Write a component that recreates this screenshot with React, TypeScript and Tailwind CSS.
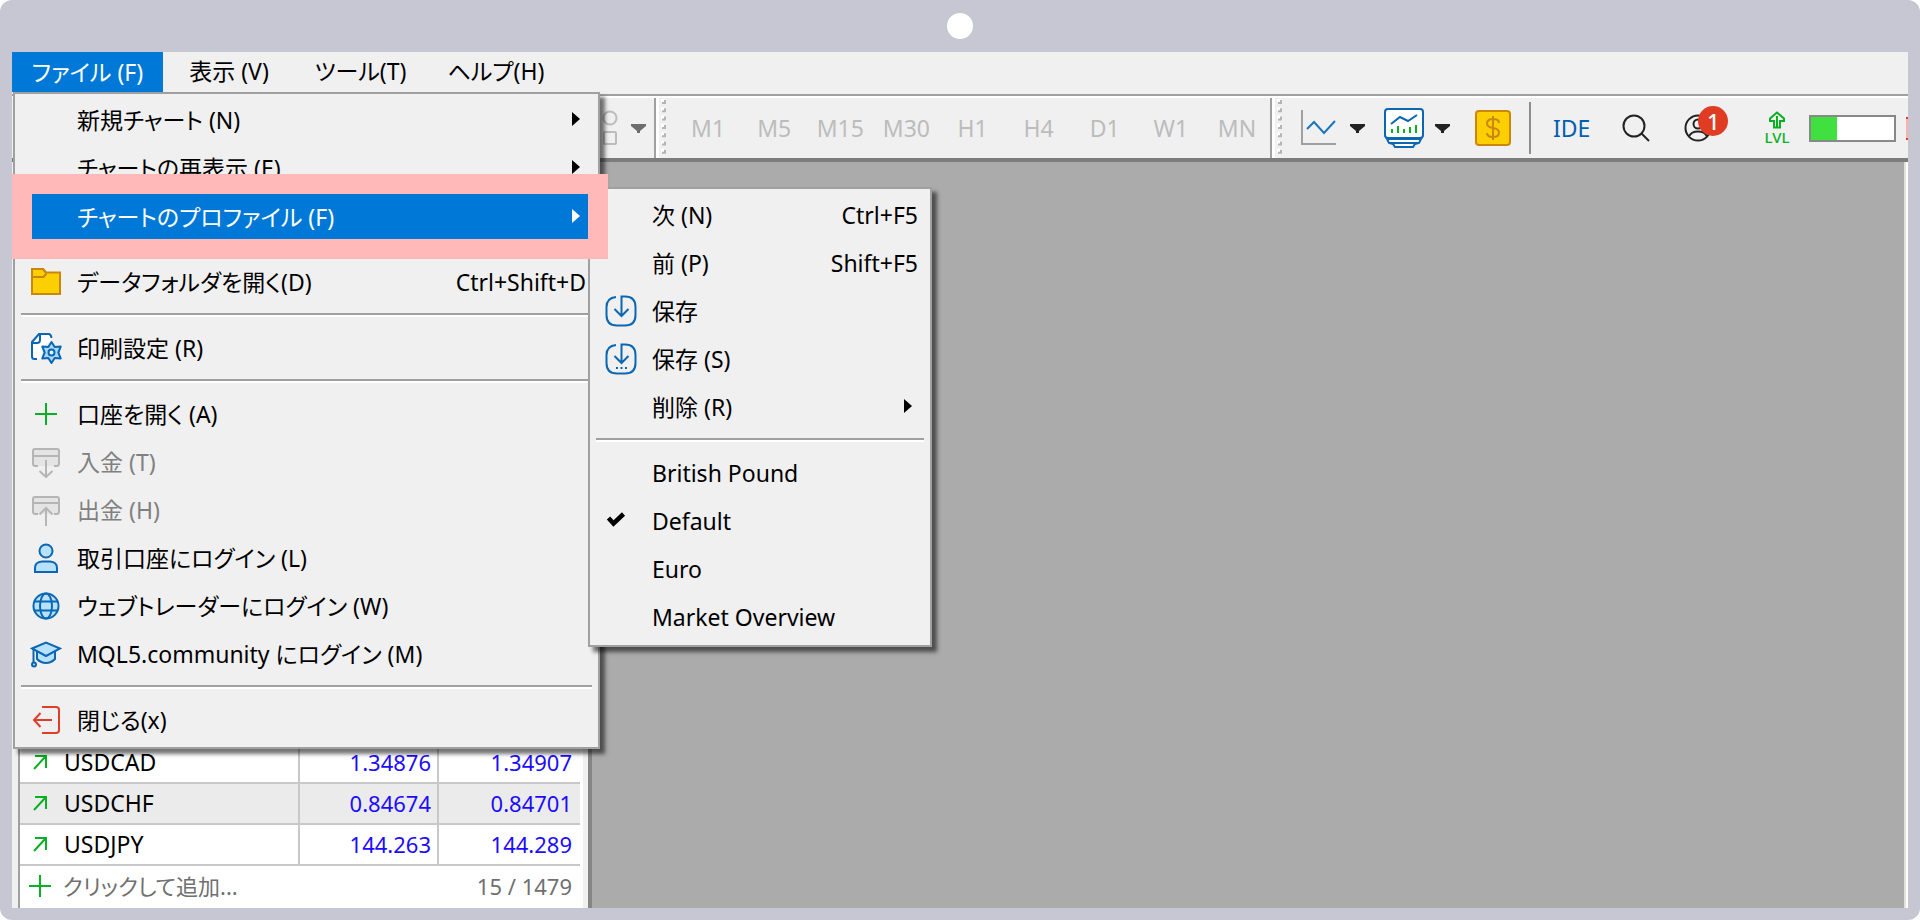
import React from 'react';

type IconName =
  | 'folder'
  | 'print'
  | 'plus'
  | 'deposit'
  | 'withdraw'
  | 'user'
  | 'globe'
  | 'cap'
  | 'exit'
  | 'save'
  | 'saveAs'
  | 'check';

type Item = {
  label: string;
  icon?: IconName;
  shortcut?: string;
  arrow?: boolean;
  disabled?: boolean;
};

const BLUE = '#0b67b2';

const icons: Record<IconName, React.ReactNode> = {
  folder: (
    <g fill="#fccf03" stroke="#cb860d" strokeWidth="2">
      <path d="M2 28V3h11l3 3.500h14V28z" />
      <path d="M2 11h11.500l3-3.500M2 3h11l3 4" fill="none" />
    </g>
  ),
  print: (
    <g stroke={BLUE} strokeWidth="2">
      <path d="M6 27H4.500Q2 27 2 24.500V10L9 2h9.500Q21 2 21 4.500V8L12 16v11z" fill="#fff" stroke="none" />
      <path d="M7 27H4.500Q2 27 2 24.500V10L9 2h9.500Q21 2 21.500 6M2 11h5q3 0 3-3V2" fill="none" />
      <path
        d="M21.500 10l3.200 5 6-.4-2.400 5.900 2.400 5.900-6-.4-3.200 5-3.200-5-6 .4 2.400-5.900-2.400-5.900 6 .4z"
        fill="#a8d8fb"
        strokeLinejoin="round"
      />
      <circle cx="21.500" cy="20.500" r="3" fill="#f0f0f0" />
    </g>
  ),
  plus: <path d="M5 16h22M16 5v22" stroke="#0ab024" strokeWidth="2" fill="none" />,
  deposit: (
    <g stroke="#b5b5b5" strokeWidth="2" fill="none">
      <path d="M8 20H5.500Q3 20 3 17.500V5q0-2 2-2h22q2 0 2 2v12.500Q29 20 26.500 20H24" fill="#e4e4e4" />
      <path d="M3 10h26M16 14v17M9.500 25l6.500 6 6.500-6" />
    </g>
  ),
  withdraw: (
    <g stroke="#b5b5b5" strokeWidth="2" fill="none">
      <path d="M8 20H5.500Q3 20 3 17.500V5q0-2 2-2h22q2 0 2 2v12.500Q29 20 26.500 20H24" fill="#e4e4e4" />
      <path d="M3 9h26M16 32V14M9.500 20.500l6.500-6.500 6.500 6.500" />
    </g>
  ),
  user: (
    <g stroke={BLUE} strokeWidth="2" fill="#b8e1ff">
      <circle cx="16" cy="9" r="6.500" />
      <path d="M5 30v-4q0-6 7-6.500h8q7 .5 7 6.500v4z" />
    </g>
  ),
  globe: (
    <g stroke={BLUE} strokeWidth="2" fill="none">
      <circle cx="16" cy="16" r="12.500" fill="#b8e1ff" />
      <ellipse cx="16" cy="16" rx="6" ry="12.500" />
      <path d="M4.500 11.500h23M4.500 20.500h23" />
    </g>
  ),
  cap: (
    <g stroke={BLUE} strokeWidth="2" fill="#b8e1ff">
      <path d="M7 13v8q4 4 9 4t9-4v-8" />
      <path d="M2 10.500L16 4.500l14 6L16 18z" />
      <path d="M3.500 11v13" fill="none" />
      <circle cx="4" cy="26.500" r="2" />
    </g>
  ),
  exit: (
    <path
      d="M12 3h14q3 0 3 3v20q0 3-3 3H12M22 16H4M10.500 9L4 16l6.500 7"
      stroke="#e03e28"
      strokeWidth="2"
      fill="none"
    />
  ),
  save: (
    <path
      d="M11 2Q1.500 3 1.500 12v8Q1.500 30.500 12 30.500h8Q30.500 30.500 30.500 20v-8Q30.500 1.500 20 1.500h-3.500V20M9.500 14l7 7 7-7"
      stroke={BLUE}
      strokeWidth="2"
      fill="none"
    />
  ),
  saveAs: (
    <g stroke={BLUE} strokeWidth="2" fill="none">
      <path d="M11 2Q1.500 3 1.500 12v8Q1.500 30.500 12 30.500h8Q30.500 30.500 30.500 20v-8Q30.500 1.500 20 1.500h-3.500V19M9.500 13l7 7 7-7" />
      <path d="M11 25h2m2.500 0h2m2.500 0h2" />
    </g>
  ),
  check: <path d="M3.500 13l5 5.500L18.500 9" stroke="#000" strokeWidth="4.500" fill="none" />,
};

const Icon: React.FC<{ name?: IconName }> = ({ name }) => (
  <svg viewBox="0 0 32 32" className="h-8 w-8 shrink-0" aria-hidden="true">
    {name && icons[name]}
  </svg>
);

const Arrow: React.FC = () => (
  <svg viewBox="0 0 8 14" className="mr-1.5 mb-0.5 h-3.5 w-2" fill="currentColor" aria-hidden="true">
    <path d="M0 0l8 7-8 7z" />
  </svg>
);

const MenuRow: React.FC<{ item: Item }> = ({ item }) => (
  <li>
    <button
      type="button"
      disabled={item.disabled}
      className="flex h-12 w-full items-center gap-[15px] pr-3 pb-1 pl-[15px] text-left disabled:text-[#808080]"
    >
      <Icon name={item.icon} />
      <span className="flex-1">{item.label}</span>
      {item.shortcut && <span>{item.shortcut}</span>}
      {item.arrow && <Arrow />}
    </button>
  </li>
);

const Separator: React.FC = () => (
  <li role="separator" className="h-[18px] px-1.5 pt-[5px]">
    <div className="h-1 border-t-2 border-[#a0a0a0] bg-white" />
  </li>
);

const saveItems: Item[] = [
  { label: '次 (N)', shortcut: 'Ctrl+F5' },
  { label: '前 (P)', shortcut: 'Shift+F5' },
  { label: '保存', icon: 'save' },
  { label: '保存 (S)', icon: 'saveAs' },
  { label: '削除 (R)', arrow: true },
];

const profiles: Item[] = [
  { label: 'British Pound' },
  { label: 'Default', icon: 'check' },
  { label: 'Euro' },
  { label: 'Market Overview' },
];

const accountItems: Item[] = [
  { label: '口座を開く (A)', icon: 'plus' },
  { label: '入金 (T)', icon: 'deposit', disabled: true },
  { label: '出金 (H)', icon: 'withdraw', disabled: true },
  { label: '取引口座にログイン (L)', icon: 'user' },
  { label: 'ウェブトレーダーにログイン (W)', icon: 'globe' },
  { label: 'MQL5.community にログイン (M)', icon: 'cap' },
];

const timeframes = ['M1', 'M5', 'M15', 'M30', 'H1', 'H4', 'D1', 'W1', 'MN'];

const quotes = [
  { symbol: 'USDCAD', bid: '1.34876', ask: '1.34907' },
  { symbol: 'USDCHF', bid: '0.84674', ask: '0.84701' },
  { symbol: 'USDJPY', bid: '144.263', ask: '144.289' },
];

const ProfileMenu: React.FC = () => (
  <ul className="absolute top-[93px] left-[573px] z-20 w-[344px] border-2 border-[#a0a0a0] bg-[#f0f0f0] pt-1 pb-0.5 shadow-[5px_5px_4px_rgba(0,0,0,0.55)]">
    {saveItems.map((item) => (
      <MenuRow key={item.label} item={item} />
    ))}
    <Separator />
    {profiles.map((item) => (
      <MenuRow key={item.label} item={item} />
    ))}
  </ul>
);

const FileMenu: React.FC = () => (
  <ul className="absolute top-10 left-px z-10 w-[587px] border-2 border-[#a0a0a0] bg-[#f0f0f0] pt-1 pb-px shadow-[5px_5px_4px_rgba(0,0,0,0.55)]">
    <MenuRow item={{ label: '新規チャート (N)', arrow: true }} />
    <MenuRow item={{ label: 'チャートの再表示 (E)', arrow: true }} />
    <li className="h-12 pr-2.5 pl-[17px]">
      <button
        type="button"
        aria-expanded="true"
        className="relative z-30 flex h-[45px] w-full items-center justify-between bg-[#0078d7] pr-0.5 pl-[45px] text-white shadow-[0_0_0_20px_#ffb9b9]"
      >
        チャートのプロファイル (F)
        <Arrow />
      </button>
      <ProfileMenu />
    </li>
    <Separator />
    <MenuRow item={{ label: 'データフォルダを開く(D)', icon: 'folder', shortcut: 'Ctrl+Shift+D' }} />
    <Separator />
    <MenuRow item={{ label: '印刷設定 (R)', icon: 'print' }} />
    <Separator />
    {accountItems.map((item) => (
      <MenuRow key={item.label} item={item} />
    ))}
    <Separator />
    <MenuRow item={{ label: '閉じる(x)', icon: 'exit' }} />
  </ul>
);

const MenuBar: React.FC = () => (
  <nav className="relative z-10 flex h-[42px] items-stretch">
    <div className="relative w-[151px]">
      <button type="button" className="h-10 w-full bg-[#0078d7] pb-px text-white">
        ファイル (F)
      </button>
      <FileMenu />
    </div>
    <button type="button" className="w-[132px] pb-1">表示 (V)</button>
    <button type="button" className="w-[131px] pb-1">ツール(T)</button>
    <button type="button" className="w-[140px] pb-1">ヘルプ(H)</button>
  </nav>
);

const Caret: React.FC<{ className: string }> = ({ className }) => (
  <svg viewBox="0 0 15 9" className={`h-[9px] w-[15px] shrink-0 ${className}`} fill="currentColor" aria-hidden="true">
    <path d="M0 0h15v2L9 7v2H6V7L0 2z" />
  </svg>
);

const Grip: React.FC = () => (
  <div className="flex h-full w-[17px] shrink-0 border-l-2 border-[#a0a0a0]">
    <div className="w-[3px] bg-white" />
    <svg viewBox="0 0 8 60" className="ml-[1px] h-[60px] w-2" aria-hidden="true">
      {[0, 1, 2, 3, 4, 5, 6].map((n) => (
        <g key={n} transform={`translate(0 ${n * 8.3})`}>
          <path d="M1 1h4v4H1z" fill="#fff" />
          <path d="M6 2v4H2V4h2V2z" fill="#b4b4b4" />
        </g>
      ))}
    </svg>
  </div>
);

const Toolbar: React.FC = () => (
  <div className="flex h-[68px] items-center overflow-hidden border-t-2 border-b-4 border-t-[#a0a0a0] border-b-[#7c7c7c]">
    <div className="flex h-full min-w-0 flex-1 items-center border-t-2 border-white">
      <div className="w-[590px] shrink-0" />
      <svg viewBox="0 0 16 38" className="h-[38px] w-4 shrink-0" fill="none" stroke="#bcbcbc" strokeWidth="2" aria-hidden="true">
        <circle cx="8" cy="9" r="6.500" />
        <rect x="2" y="23" width="12" height="12" rx="1" />
      </svg>
      <Caret className="mr-2 ml-[13px] text-[#6d6d6d]" />
      <Grip />
      <div className="grid w-[599px] shrink-0 grid-cols-9 pl-1 text-[#bcbcbc]">
        {timeframes.map((tf) => (
          <button key={tf} type="button" className="text-center">
            {tf}
          </button>
        ))}
      </div>
      <Grip />
      <button type="button" aria-label="Chart type" className="ml-[13px] flex shrink-0 items-center">
        <svg viewBox="0 0 36 36" className="h-9 w-9" fill="none" strokeWidth="2">
          <path d="M2 0v34h34" stroke="#a0a0a0" />
          <path d="M7 19l7-7 10 11 11-12" stroke="#1b75bb" />
        </svg>
        <Caret className="ml-3.5 text-[#222]" />
      </button>
      <button type="button" aria-label="Indicators" className="ml-[19px] flex shrink-0 items-center">
        <svg viewBox="0 0 40 40" className="h-10 w-10" fill="none" strokeWidth="2">
          <path d="M3 31h34l-2 4-4 1-2 3H11l-2-3-4-1z" fill="#fff" stroke={BLUE} />
          <path d="M6 35h28" stroke={BLUE} />
          <rect x="1" y="1" width="38" height="29" rx="3" fill="#fff" stroke={BLUE} />
          <path d="M7 16l9-7 8 4 9-6" stroke={BLUE} />
          <path d="M8 25v-4M14 25v-7M20 25v-4M26 25v-6M32 25v-8" stroke="#0ab024" />
        </svg>
        <Caret className="ml-[11px] text-[#222]" />
      </button>
      <button type="button" aria-label="Trading" className="ml-[25px] shrink-0">
        <svg viewBox="0 0 36 36" className="h-9 w-9" fill="none" stroke="#cb860d" strokeWidth="2">
          <rect x="1" y="1" width="34" height="34" rx="3" fill="#fccf03" />
          <path d="M24 13q0-4-6-4t-6 4.500q0 3.500 6 4.500t6 4.500Q24 27 18 27t-6-4M18 6v24" />
        </svg>
      </button>
      <div className="ml-[18px] h-[52px] w-0.5 shrink-0 bg-[#8f8f8f]" />
      <button type="button" className="ml-[22px] shrink-0 text-[#005fae]">IDE</button>
      <button type="button" aria-label="Search" className="ml-8 shrink-0">
        <svg viewBox="0 0 28 28" className="h-7 w-7" fill="none" stroke="#222" strokeWidth="2">
          <circle cx="12" cy="12" r="10.500" />
          <path d="M19.500 19.500l7.500 7.500" />
        </svg>
      </button>
      <button type="button" aria-label="Account" className="relative ml-[34px] flex w-11 shrink-0 items-center">
        <svg viewBox="0 0 28 28" className="h-7 w-7" fill="none" stroke="#222" strokeWidth="2">
          <circle cx="14" cy="14" r="12.500" />
          <circle cx="14" cy="10" r="4.500" />
          <path d="M5 22.500q2-5 9-5t9 5" />
        </svg>
        <span className="absolute -top-2 left-[14px] h-[30px] w-[30px] rounded-full bg-[#e03c24] text-center text-[22px] leading-[30px] font-medium text-white">
          1
        </span>
      </button>
      <div className="ml-auto flex shrink-0 items-center">
        <div className="flex w-[26px] flex-col items-center text-[#0ab024]">
          <svg viewBox="0 0 18 18" className="h-[18px] w-[18px]" fill="none" stroke="currentColor" strokeWidth="2" aria-hidden="true">
            <path d="M9 1.500L2 7.500v2.500h4V16.500h6V10h4V7.500zM9 5v11" />
          </svg>
          <span className="text-[15px] leading-[16px] font-medium">LVL</span>
        </div>
        <div className="mr-2.5 ml-[19px] h-[27px] w-[87px] border-2 border-[#888] bg-white">
          <div className="h-full w-[26px] bg-[#40e040]" />
        </div>
        <div className="h-[23px] w-0.5 border-y-2 border-[#e03c24] bg-[#f8b4ac]" />
      </div>
    </div>
  </div>
);

const MarketWatch: React.FC = () => (
  <aside className="flex w-[580px] shrink-0 border-r-4 border-[#858585] pl-1.5">
    <div className="mr-[5px] flex flex-1 flex-col justify-end border-l-2 border-[#a0a0a0] bg-white pr-[3px]">
      <table className="w-full table-fixed border-separate border-spacing-0">
        <tbody>
          {quotes.map((q) => (
            <tr key={q.symbol} className="h-[41px] even:bg-[#ebebeb]">
              <td className="w-[280px] border-r-2 border-b-2 border-[#c8c8c8] p-0 pb-0.5">
                <div className="flex items-center gap-4 pl-3">
                  <svg viewBox="0 0 16 16" className="h-4 w-4" fill="none" stroke="#0ab024" strokeWidth="2" aria-hidden="true">
                    <path d="M3 2h11v12M14 2L2 15" />
                  </svg>
                  {q.symbol}
                </div>
              </td>
              <td className="w-[139px] border-r-2 border-b-2 border-[#c8c8c8] p-0 pr-1.5 pb-0.5 text-right text-[22px] text-[#1c0cff]">
                {q.bid}
              </td>
              <td className="border-b-2 border-[#c8c8c8] p-0 pr-2 pb-0.5 text-right text-[22px] text-[#1c0cff]">{q.ask}</td>
            </tr>
          ))}
        </tbody>
      </table>
      <div className="flex h-[42px] items-center justify-between pr-2 pb-0.5 pl-[9px] text-[22px] text-[#707070]">
        <button type="button" className="flex items-center gap-3">
          <svg viewBox="0 0 22 22" className="h-[22px] w-[22px]" stroke="#0ab024" strokeWidth="2" aria-hidden="true">
            <path d="M0 11h22M11 0v22" />
          </svg>
          クリックして追加...
        </button>
        <span>15 / 1479</span>
      </div>
    </div>
  </aside>
);

const App: React.FC = () => {
  return (
    <div className="bg-white">
      <div className="flex min-h-screen flex-col rounded-xl bg-[#c7c6d3] px-3 pb-3 font-['Noto_Sans','Noto_Sans_CJK_JP',sans-serif] text-[23px] leading-[30px] text-black [font-feature-settings:'palt']">
        <header className="flex h-[52px] items-center justify-center">
          <span className="h-[26px] w-[26px] rounded-full bg-white" />
        </header>
        <main className="flex flex-1 flex-col bg-[#f0f0f0]">
          <MenuBar />
          <Toolbar />
          <div className="flex flex-1">
            <MarketWatch />
            <section className="flex-1 border-r-2 border-[#e3e0dc] bg-[#ababab]" />
            <div className="w-0.5 bg-white" />
          </div>
        </main>
      </div>
    </div>
  );
};

export default App;
